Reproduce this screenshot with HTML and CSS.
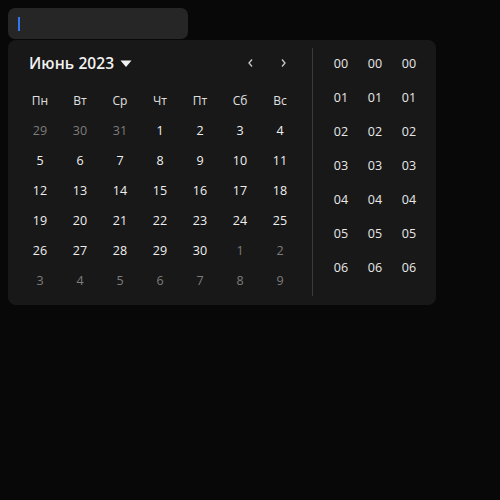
FILE: index.html
```html
<!DOCTYPE html>
<html lang="ru">
<head>
<meta charset="utf-8">
<link rel="stylesheet" href="styles.css">
</head>
<body>
<div class="field"><span class="caret"></span></div>
<div class="popup">
  <div class="calendar">
    <div class="cal-head">
      <div class="month">Июнь 2023
        <svg class="tri" width="12" height="8" viewBox="0 0 12 8"><path d="M0.5 0.5 L11.5 0.5 L6 7 Z" fill="#f2f2f2"/></svg>
      </div>
      <div class="navs">
        <svg class="nav" width="32" height="30" viewBox="0 0 32 30"><path d="M17 11.5 L14 15 L17 18.5" fill="none" stroke="#c8c8c8" stroke-width="1.3"/></svg>
        <svg class="nav" width="32" height="30" viewBox="0 0 32 30"><path d="M15 11.5 L18 15 L15 18.5" fill="none" stroke="#c8c8c8" stroke-width="1.3"/></svg>
      </div>
    </div>
    <div class="grid">
      <div class="wd">Пн</div><div class="wd">Вт</div><div class="wd">Ср</div><div class="wd">Чт</div><div class="wd">Пт</div><div class="wd">Сб</div><div class="wd">Вс</div>
      <div class="d out">29</div><div class="d out">30</div><div class="d out">31</div><div class="d">1</div><div class="d">2</div><div class="d">3</div><div class="d">4</div>
      <div class="d">5</div><div class="d">6</div><div class="d">7</div><div class="d">8</div><div class="d">9</div><div class="d">10</div><div class="d">11</div>
      <div class="d">12</div><div class="d">13</div><div class="d">14</div><div class="d">15</div><div class="d">16</div><div class="d">17</div><div class="d">18</div>
      <div class="d">19</div><div class="d">20</div><div class="d">21</div><div class="d">22</div><div class="d">23</div><div class="d">24</div><div class="d">25</div>
      <div class="d">26</div><div class="d">27</div><div class="d">28</div><div class="d">29</div><div class="d">30</div><div class="d out">1</div><div class="d out">2</div>
      <div class="d out">3</div><div class="d out">4</div><div class="d out">5</div><div class="d out">6</div><div class="d out">7</div><div class="d out">8</div><div class="d out">9</div>
    </div>
  </div>
  <div class="sep"></div>
  <div class="time">
    <div class="col"><div class="t">00</div><div class="t">01</div><div class="t">02</div><div class="t">03</div><div class="t">04</div><div class="t">05</div><div class="t">06</div></div>
    <div class="col"><div class="t">00</div><div class="t">01</div><div class="t">02</div><div class="t">03</div><div class="t">04</div><div class="t">05</div><div class="t">06</div></div>
    <div class="col"><div class="t">00</div><div class="t">01</div><div class="t">02</div><div class="t">03</div><div class="t">04</div><div class="t">05</div><div class="t">06</div></div>
  </div>
</div>
</body>
</html>
```
FILE: styles.css
```css
html, body {
  margin: 0;
  padding: 0;
  background: #080808;
}
body {
  padding: 8px;
  font-family: "Open Sans", "Liberation Sans", sans-serif;
  color: #ececec;
}
.field {
  width: 180px;
  height: 31px;
  background: #262626;
  border-radius: 7px;
  display: flex;
  align-items: center;
  padding-left: 10px;
  box-sizing: border-box;
}
.caret {
  width: 2px;
  height: 14px;
  background: #2f76f0;
}
.popup {
  margin-top: 1px;
  width: 428px;
  height: 265px;
  box-sizing: border-box;
  background: #181818;
  border-radius: 8px;
  padding: 8px 0 10px 12px;
  display: flex;
}
.calendar {
  width: 280px;
  flex-shrink: 0;
}
.cal-head {
  height: 30px;
  display: flex;
  align-items: center;
  justify-content: space-between;
  margin-bottom: 7px;
}
.month {
  padding-left: 9px;
  font-size: 15.5px;
  font-weight: 600;
  color: #f2f2f2;
  display: flex;
  align-items: center;
  gap: 6px;
  letter-spacing: 0.1px;
}
.tri {
  margin-top: 1px;
}
.navs {
  display: flex;
  margin-right: 1px;
}
.nav {
  display: block;
}
.grid {
  display: grid;
  grid-template-columns: repeat(7, 40px);
  grid-auto-rows: 30px;
}
.wd, .d {
  display: flex;
  align-items: center;
  justify-content: center;
  font-size: 12.5px;
}
.wd {
  font-size: 12px;
  color: #e0e0e0;
}
.d {
  color: #f0f0f0;
}
.d.out {
  color: #7d7d7d;
}
.sep {
  flex-shrink: 0;
  width: 1px;
  background: #3a3a3a;
  margin-left: 12px;
  margin-bottom: -1px;
}
.time {
  flex-shrink: 0;
  display: flex;
  padding-left: 11px;
}
.col {
  width: 34px;
  display: flex;
  flex-direction: column;
  gap: 4px;
}
.t {
  height: 30px;
  display: flex;
  align-items: center;
  justify-content: center;
  font-size: 12.5px;
  color: #e8e8e8;
}
```
